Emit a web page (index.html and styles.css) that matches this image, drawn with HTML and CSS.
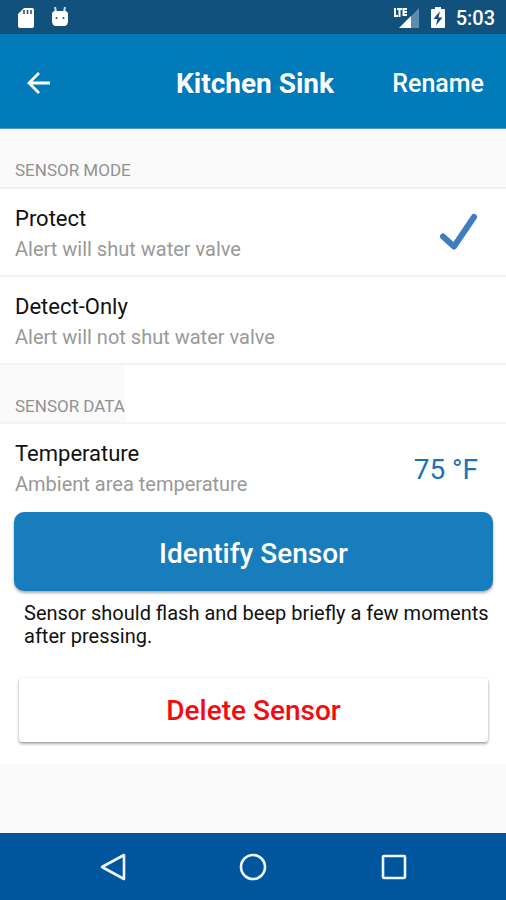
FILE: index.html
```html
<!DOCTYPE html>
<html lang="en">
<head>
<meta charset="utf-8">
<meta name="viewport" content="width=device-width, initial-scale=1">
<title>Kitchen Sink</title>
<link rel="stylesheet" href="styles.css">
</head>
<body>
<div class="status-bar">
  <div class="status-group">
    <svg class="sd-icon" width="18" height="22" viewBox="0 0 18 22" aria-hidden="true"><path d="M7 1h8a2 2 0 0 1 2 2v16a2 2 0 0 1-2 2H3a2 2 0 0 1-2-2V7z" fill="#fff"/><path d="M7 3v4M10.500 3v4M14 3v4" stroke="#26417f" stroke-width="1.500"/></svg>
    <svg width="18" height="22" viewBox="0 0 18 22" aria-hidden="true"><path d="M4 0l1 5M14 0l-1 5" stroke="#c8dcea" stroke-width="2"/><path d="M3 4h12l2 2v8q0 5-4 5H5q-4 0-4-5V6z" fill="#fff"/><circle cx="5.500" cy="11" r="1" fill="#174d75"/><circle cx="12.500" cy="11" r="1" fill="#174d75"/></svg>
  </div>
  <div class="status-group status-right">
    <svg width="28" height="22" viewBox="0 0 28 22" aria-hidden="true"><path d="M27 1v20H8z" fill="#5d8cae"/><path d="M19 9v12H7z" fill="#fff"/><path d="M3 1v8h3M5 2h5M7.500 1v9M15 2h-3.500v6H15M11.500 5H15" fill="none" stroke="#fff" stroke-width="2"/></svg>
    <svg width="16" height="22" viewBox="0 0 16 22" aria-hidden="true"><path d="M5 0h6v2h3a1 1 0 0 1 1 1v17a1 1 0 0 1-1 1H2a1 1 0 0 1-1-1V3a1 1 0 0 1 1-1h3z" fill="#fff"/><path d="M10 4L3.500 12H7.500L6 18.500 12.500 10.500H8.500z" fill="#174d75"/></svg>
    <time class="clock">5:03</time>
  </div>
</div>
<header class="app-bar">
  <button class="back" type="button" aria-label="Back">
    <svg width="24" height="24" viewBox="0 0 24 24" aria-hidden="true"><path d="M24 12H3M13 2L3 12l10 10" fill="none" stroke="#fff" stroke-width="2.800"/></svg>
  </button>
  <h1 class="title">Kitchen Sink</h1>
  <button class="rename" type="button">Rename</button>
</header>
<main class="content">
  <h2 class="section-title" id="mode-title">Sensor mode</h2>
  <div role="radiogroup" aria-labelledby="mode-title">
    <label class="row option">
      <input class="option-input" type="radio" name="mode" checked>
      <span class="row-text"><span class="row-name">Protect</span><span class="row-note">Alert will shut water valve</span></span>
      <svg class="check" width="40" height="38" viewBox="0 0 40 38" aria-hidden="true"><path d="M5 23.500L16 33.500 36 4" fill="none" stroke="#3f7dbd" stroke-width="6" stroke-linecap="round" stroke-linejoin="round"/></svg>
    </label>
    <label class="row option">
      <input class="option-input" type="radio" name="mode">
      <span class="row-text"><span class="row-name">Detect-Only</span><span class="row-note">Alert will not shut water valve</span></span>
      <svg class="check" width="40" height="38" viewBox="0 0 40 38" aria-hidden="true"><path d="M5 23.500L16 33.500 36 4" fill="none" stroke="#3f7dbd" stroke-width="6" stroke-linecap="round" stroke-linejoin="round"/></svg>
    </label>
  </div>
  <div class="data-heading"><h2 class="section-title compact">Sensor data</h2></div>
  <div class="row reading">
    <div class="row-text"><span class="row-name">Temperature</span><span class="row-note">Ambient area temperature</span></div>
    <span class="temperature">75 °F</span>
  </div>
  <div class="actions">
    <button class="identify" type="button">Identify Sensor</button>
    <p class="hint">Sensor should flash and beep briefly a few moments after pressing.</p>
    <button class="delete" type="button">Delete Sensor</button>
  </div>
</main>
<nav class="nav-bar" aria-label="System">
  <button class="nav-button" type="button" aria-label="Back"><svg width="28" height="28" viewBox="0 0 28 28" aria-hidden="true"><path d="M25 2v24L3 14z" fill="none" stroke="#eef5ff" stroke-width="2.600" stroke-linejoin="round"/></svg></button>
  <button class="nav-button" type="button" aria-label="Home"><svg width="28" height="28" viewBox="0 0 28 28" aria-hidden="true"><circle cx="14" cy="14" r="12" fill="none" stroke="#eef5ff" stroke-width="2.600"/></svg></button>
  <button class="nav-button" type="button" aria-label="Recent apps"><svg width="28" height="28" viewBox="0 0 28 28" aria-hidden="true"><rect x="3" y="3" width="22" height="22" rx="1" fill="none" stroke="#eef5ff" stroke-width="2.600"/></svg></button>
</nav>
</body>
</html>
```
FILE: styles.css
```css
* {
  box-sizing: border-box;
}

body {
  margin: 0;
  min-height: 100vh;
  display: flex;
  flex-direction: column;
  background: #fafafa;
  color: #111;
  font-family: Roboto, "Liberation Sans", sans-serif;
}

button {
  border: 0;
  padding: 0;
  background: none;
  color: inherit;
  font: inherit;
  cursor: pointer;
}

svg {
  display: block;
}

.status-bar {
  height: 34px;
  padding: 2px 11px 0 17px;
  display: flex;
  align-items: center;
  justify-content: space-between;
  background: #12517c;
  color: #fff;
}

.status-group {
  display: flex;
  align-items: center;
  gap: 16px;
}

.status-right {
  gap: 10px;
}

.clock {
  font-size: 20px;
  font-weight: 500;
}

.app-bar {
  height: 95px;
  padding: 4px 22px 0 26px;
  display: grid;
  grid-template-columns: 1fr auto 1fr;
  align-items: center;
  background: #007ab9;
  color: #fff;
  border-bottom: 1px solid #4c9bcb;
}

.back {
  justify-self: start;
}

.title {
  margin: 0;
  font-size: 28px;
  font-weight: 700;
}

.rename {
  justify-self: end;
  font-size: 25px;
  font-weight: 500;
}

.content {
  background: #fff;
}

.section-title {
  margin: 0;
  height: 60px;
  padding: 31px 15px 0;
  background: #fafafa;
  border-bottom: 2px solid #f1f1f1;
  color: #929292;
  font-size: 17px;
  line-height: 20px;
  font-weight: 400;
  text-transform: uppercase;
}

.data-heading {
  display: flex;
  border-bottom: 2px solid #f4f4f4;
}

.compact {
  height: 57px;
  padding-right: 0;
  border: 0;
}

.row {
  min-height: 88px;
  padding: 16px 28px 0 15px;
  display: flex;
  justify-content: space-between;
}

.option {
  border-bottom: 2px solid #f2f2f2;
  cursor: pointer;
}

.option-input {
  position: absolute;
  opacity: 0;
}

.row-text {
  display: flex;
  flex-direction: column;
  gap: 2px;
}

.row-name {
  font-size: 22px;
  line-height: 28px;
}

.row-note {
  color: #999;
  font-size: 20px;
  line-height: 28px;
}

.check {
  visibility: hidden;
  margin-top: 8px;
}

.option-input:checked ~ .check {
  visibility: visible;
}

.temperature {
  padding-top: 12px;
  color: #1c72b5;
  font-size: 28px;
  line-height: 36px;
}

.actions {
  padding: 0 13px 22px 14px;
}

.identify {
  display: block;
  width: 100%;
  height: 79px;
  padding-top: 4px;
  border-radius: 10px;
  background: #187dbc;
  box-shadow: 0 2px 3px #0005;
  color: #fff;
  font-size: 28px;
  font-weight: 500;
}

.hint {
  margin: 11px 0 30px 10px;
  font-size: 20px;
  line-height: 23px;
}

.delete {
  display: block;
  width: calc(100% - 10px);
  height: 64px;
  margin: 0 auto;
  border-radius: 3px;
  background: #fff;
  box-shadow: 0 2px 3px #0005, 0 0 2px #0002;
  color: #f8080f;
  font-size: 28px;
  font-weight: 500;
}

.nav-bar {
  height: 67px;
  margin-top: auto;
  padding: 0 42px 0 43px;
  display: grid;
  grid-template-columns: repeat(3, 1fr);
  background: #00569d;
  border-top: 1px solid #1a4a93;
}

.nav-button {
  display: grid;
  place-items: center;
}
```
